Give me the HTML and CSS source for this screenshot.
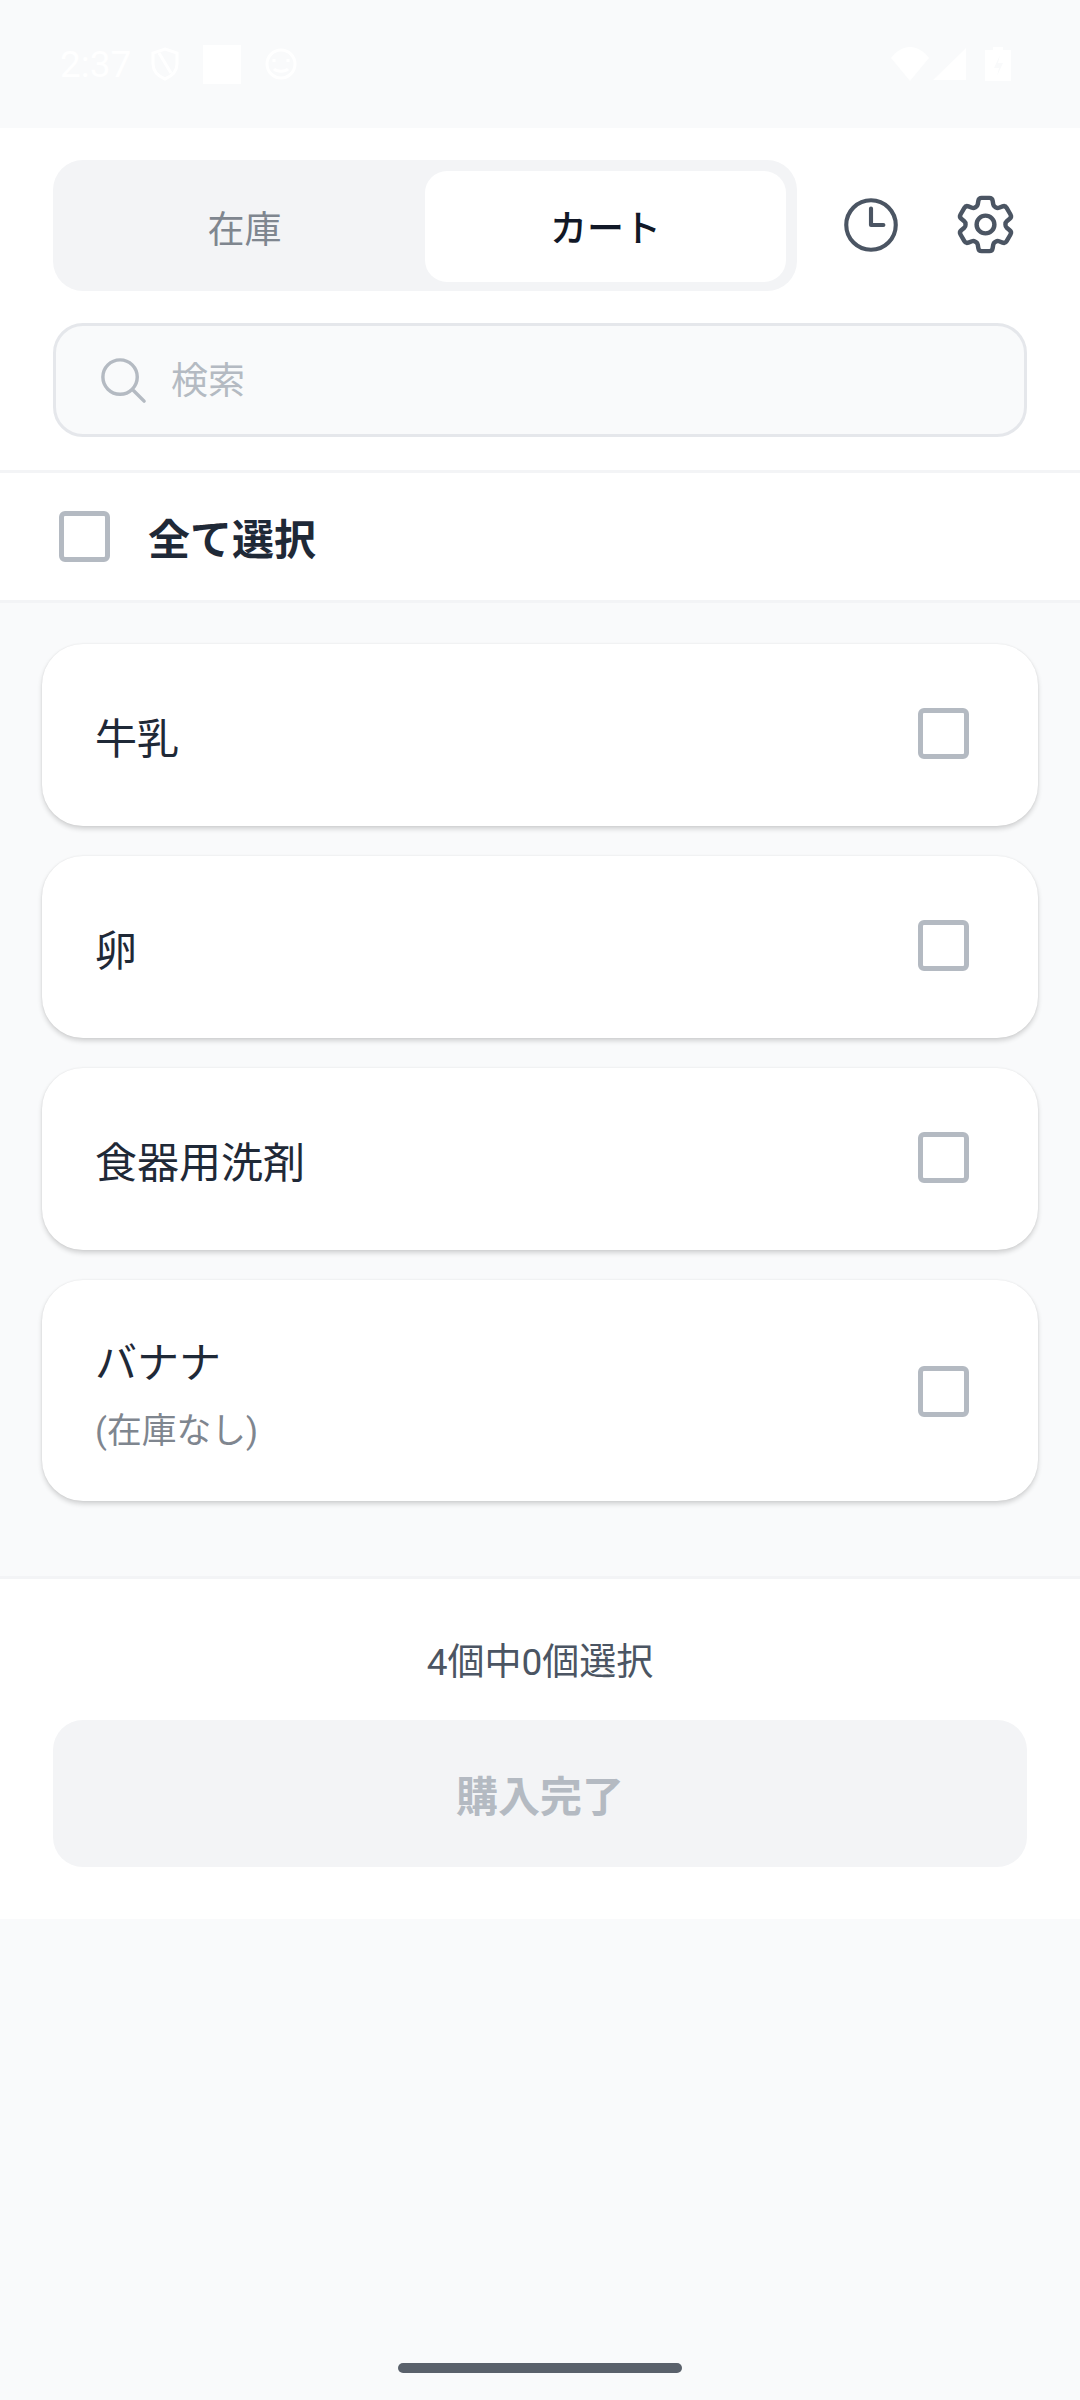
FILE: index.html
```html
<!DOCTYPE html>
<html lang="ja">
<head>
  <meta charset="UTF-8">
  <meta name="viewport" content="width=device-width, initial-scale=1.0">
  <title>カート</title>
  <link rel="stylesheet" href="styles.css">
</head>
<body>
  <div class="status-bar">
    <span class="status-time">2:37</span>
    <svg class="status-shield" viewBox="0 0 30 34" fill="none" stroke="#fff" stroke-width="3"><path d="M15 2l12 4v11c0 7-5 12-12 15C8 29 3 24 3 17V6z"/><path d="M9 6l12 20"/></svg>
    <span class="status-square"></span>
    <svg class="status-face" viewBox="0 0 32 34" fill="none" stroke="#fff" stroke-width="3"><circle cx="16" cy="17" r="14"/><path d="M9 12v3M23 12v3M9 22c3 3 11 3 14 0"/></svg>
    <span class="status-gap"></span>
    <svg class="status-wifi" viewBox="0 0 38 34" fill="#fff"><path d="M0 11C5 4 12 0 19 0s14 4 19 11L19 34z"/></svg>
    <svg class="status-signal" viewBox="0 0 33 32" fill="#fff"><path d="M33 0v32H0z"/></svg>
    <svg class="status-battery" viewBox="0 0 26 34" fill="#fff"><path fill-rule="evenodd" d="M8 0h10v3h8v31H0V3h8zM15 8l-6 13h5l-2 8 6-13h-5z"/></svg>
  </div>

  <div class="header">
    <div class="header-top">
      <div class="tabs">
        <button class="tab">在庫</button>
        <button class="tab active">カート</button>
      </div>
      <button class="icon-btn">
        <svg viewBox="0 0 24 24" fill="none" stroke="#4b5563" stroke-width="1.5" stroke-linecap="round" stroke-linejoin="round"><path d="M12 6v6h4.5m4.5 0a9 9 0 1 1-18 0 9 9 0 0 1 18 0Z"/></svg>
      </button>
      <button class="icon-btn icon-btn-gear">
        <svg viewBox="0 0 24 24" fill="none" stroke="#4b5563" stroke-width="1.5" stroke-linecap="round" stroke-linejoin="round"><path d="M9.594 3.94c.09-.542.56-.94 1.11-.94h2.593c.55 0 1.02.398 1.11.94l.213 1.281c.063.374.313.686.645.87.074.04.147.083.22.127.325.196.72.257 1.075.124l1.217-.456a1.125 1.125 0 0 1 1.37.49l1.296 2.247a1.125 1.125 0 0 1-.26 1.431l-1.003.827c-.293.241-.438.613-.43.992a7.723 7.723 0 0 1 0 .255c-.008.378.137.75.43.991l1.004.827c.424.35.534.955.26 1.43l-1.298 2.247a1.125 1.125 0 0 1-1.369.491l-1.217-.456c-.355-.133-.75-.072-1.076.124a6.47 6.47 0 0 1-.22.128c-.331.183-.581.495-.644.869l-.213 1.281c-.09.543-.56.94-1.11.94h-2.594c-.55 0-1.019-.398-1.11-.94l-.213-1.281c-.062-.374-.312-.686-.644-.87a6.52 6.52 0 0 1-.22-.127c-.325-.196-.72-.257-1.076-.124l-1.217.456a1.125 1.125 0 0 1-1.369-.49l-1.297-2.247a1.125 1.125 0 0 1 .26-1.431l1.004-.827c.292-.24.437-.613.43-.991a6.932 6.932 0 0 1 0-.255c.007-.38-.138-.751-.43-.992l-1.004-.827a1.125 1.125 0 0 1-.26-1.43l1.297-2.247a1.125 1.125 0 0 1 1.37-.491l1.216.456c.356.133.751.072 1.076-.124.072-.044.146-.086.22-.128.332-.183.582-.495.644-.869l.214-1.28Z"/><path d="M15 12a3 3 0 1 1-6 0 3 3 0 0 1 6 0Z"/></svg>
      </button>
    </div>
    <label class="search">
      <svg viewBox="0 0 24 24" fill="none" stroke="#b4bac2" stroke-width="1.5" stroke-linecap="round" stroke-linejoin="round"><path d="m21 21-5.197-5.197m0 0A7.5 7.5 0 1 0 5.196 5.196a7.5 7.5 0 0 0 10.607 10.607Z"/></svg>
      <input type="text" placeholder="検索">
    </label>
  </div>

  <div class="select-all">
    <span class="checkbox"></span>
    <span class="select-all-label">全て選択</span>
  </div>

  <div class="list">
    <div class="card">
      <div class="card-text"><div class="card-name">牛乳</div></div>
      <span class="checkbox"></span>
    </div>
    <div class="card">
      <div class="card-text"><div class="card-name">卵</div></div>
      <span class="checkbox"></span>
    </div>
    <div class="card">
      <div class="card-text"><div class="card-name">食器用洗剤</div></div>
      <span class="checkbox"></span>
    </div>
    <div class="card card-tall">
      <div class="card-text">
        <div class="card-name">バナナ</div>
        <div class="card-note">(在庫なし)</div>
      </div>
      <span class="checkbox"></span>
    </div>
  </div>

  <div class="footer">
    <div class="footer-count">4個中0個選択</div>
    <button class="buy-btn">購入完了</button>
  </div>

  <div class="home-bar"></div>
</body>
</html>
```

FILE: styles.css
```css
* { box-sizing: border-box; }
html, body { margin: 0; padding: 0; }
body { display: flex; flex-direction: column; height: 2400px; background: #f9fafb; color: #1f2937; font-family: Roboto, "Noto Sans CJK JP", sans-serif; }
button { border: none; padding: 0; background: none; font-family: inherit; }

.status-bar { display: flex; align-items: center; height: 128px; padding: 0 69px 0 60px; color: #fff; }
.status-time { width: 90px; font-size: 37px; }
.status-shield { width: 30px; height: 34px; margin-right: 23px; }
.status-square { width: 38px; height: 39px; margin-right: 24px; background: #fff; }
.status-face { width: 32px; height: 34px; }
.status-gap { flex: 1; }
.status-wifi { width: 38px; height: 34px; margin-right: 4px; }
.status-signal { width: 33px; height: 32px; margin-right: 19px; }
.status-battery { width: 26px; height: 34px; }

.header { padding: 32px 53px 33px; background: #fff; }
.header-top { display: flex; align-items: center; gap: 33px; margin-bottom: 32px; }
.tabs { display: flex; flex: 1; height: 131px; padding: 11px 11px 9px; border-radius: 30px; background: #f3f4f6; }
.tab { flex: 1; border-radius: 22px; color: #7f868f; font-size: 37px; }
.tab.active { background: #fff; color: #111827; font-weight: 500; padding-bottom: 2px; }
.icon-btn { display: flex; align-items: center; justify-content: center; width: 82px; height: 82px; margin-top: -2px; }
.icon-btn svg { flex: none; width: 66px; height: 66px; }
.icon-btn-gear { padding-right: 2px; }
.icon-btn-gear svg { width: 71px; height: 71px; }

.search { display: flex; align-items: center; gap: 20px; height: 114px; padding: 0 40px; border: 3px solid #e5e7eb; border-radius: 30px; background: #f9fafb; }
.search svg { width: 55px; height: 55px; }
.search input { flex: 1; min-width: 0; border: none; outline: none; padding: 2px 0 0; background: none; font-family: inherit; font-size: 37px; }
.search input::placeholder { color: #b4bac2; opacity: 1; }

.select-all { display: flex; align-items: center; gap: 38px; height: 133px; padding: 0 59px; border-top: 3px solid #f3f4f6; border-bottom: 3px solid #f3f4f6; background: #fff; }
.select-all-label { font-size: 42px; font-weight: 700; color: #1f2937; }
.checkbox { flex: none; width: 51px; height: 51px; border: 5px solid #b4bac2; border-radius: 6px; background: #fff; }

.list { display: flex; flex-direction: column; gap: 30px; padding: 41px 42px 75px; }
.card { display: flex; align-items: center; padding: 56px 69px 56px 53px; border-radius: 41px; background: #fff; box-shadow: 0 3px 5px rgba(0, 0, 0, 0.16), 0 0 2px rgba(0, 0, 0, 0.08); }
.card .checkbox { margin-bottom: 3px; }
.card-tall { padding-top: 44px; padding-bottom: 45px; }
.card-tall .checkbox { margin: 3px 0 0; }
.card-text { flex: 1; padding-top: 10px; }
.card-name { font-size: 42px; line-height: 60px; }
.card-note { margin-top: 12px; font-size: 34.75px; line-height: 50px; color: #7f868f; }

.footer { padding: 54px 53px 52px; border-top: 3px solid #f3f4f6; background: #fff; }
.footer-count { margin-bottom: 27px; font-size: 37px; line-height: 60px; text-align: center; color: #4b5563; }
.buy-btn { display: block; width: 100%; height: 147px; border-radius: 30px; background: #f3f4f6; color: #b4bac2; font-size: 42px; font-weight: 700; }

.home-bar { flex: none; width: 284px; height: 10px; margin: auto auto 27px; border-radius: 5px; background: #5a616b; }
```
